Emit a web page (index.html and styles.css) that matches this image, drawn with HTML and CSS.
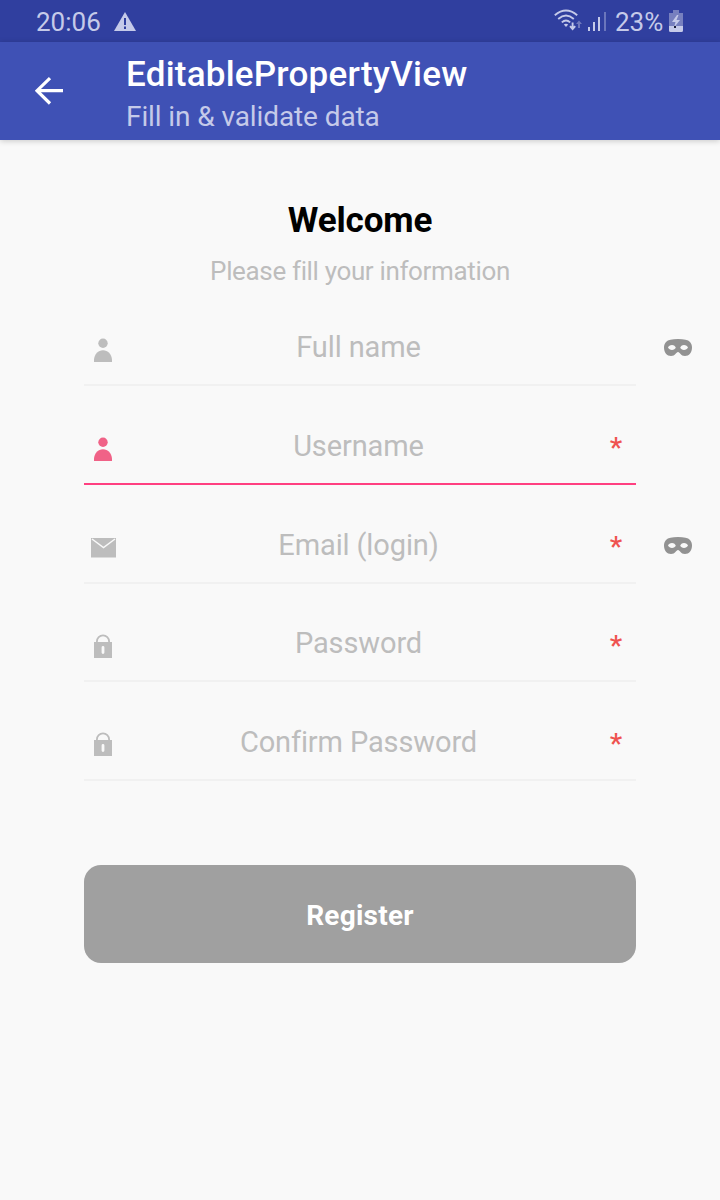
FILE: index.html
```html
<!DOCTYPE html>
<html lang="en">
<head>
<meta charset="utf-8">
<title>EditablePropertyView</title>
<link rel="stylesheet" href="styles.css">
</head>
<body>
<svg class="defs" width="0" height="0">
  <symbol id="person" viewBox="0 0 18 24"><circle cx="9" cy="5.200" r="4.700"/><path d="M0 24v-2.500C.6 16 4 12.200 9 12.200S17.400 16 18 21.500V24z"/></symbol>
  <symbol id="lock" viewBox="0 0 18 24"><path d="M2.900 9V7.500a6.100 6.100 0 0 1 12.200 0V9" fill="none" stroke="currentColor" stroke-width="1.800"/><path fill-rule="evenodd" d="M0 8h18v16H0zM9 12a1.400 1.400 0 0 0-1.400 1.400v5.200a1.400 1.400 0 0 0 2.800 0v-5.200A1.400 1.400 0 0 0 9 12z"/></symbol>
  <symbol id="mask" viewBox="0 0 28 17"><path fill-rule="evenodd" d="M14 0C20 0 24 .7 26 3c1.300 1.500 2 3.300 2 5.500 0 5-3 8.500-7 8.500-4.500 0-5-4-7-4s-2.500 4-7 4c-4 0-7-3.500-7-8.500C0 6.300.7 4.500 2 3 4 .7 8 0 14 0zM8 6C6 6 4.600 7.300 4 8.500 4.800 10 6.200 11 8 11s3.300-1 3.800-2.200C11.300 7.200 10 6 8 6zM20 6c-2 0-3.300 1.200-3.800 2.800C16.700 10 18.200 11 20 11s3.200-1 4-2.500C23.400 7.300 22 6 20 6z"/></symbol>
</svg>
<header class="status">
  <span class="clock">20:06</span>
  <svg class="warn" width="22" height="19" viewBox="0 0 22 19"><path fill="#c5cae9" d="M11 0l11 19H0z"/><path fill="#303f9f" d="M10 6h2v7h-2zM10 14.500h2v2.500h-2z"/></svg>
  <svg class="wifi" width="28" height="22" viewBox="0 0 28 22"><g fill="none" stroke="#c5cae9" stroke-width="1.900"><path d="M.8 6.200q11.200-9.400 22.400 0"/><path d="M4.200 9.900q7.800-6.600 15.600 0"/><path d="M7.800 13.400q4.200-3.600 8.400 0"/><path d="M18.600 13.500v6.500M16 17.200l2.600 2.800 2.600-2.800"/></g><path fill="#c5cae9" d="M9.800 15.500q2.200-1.700 4.400 0L12 18z"/><path fill="#7079bc" d="M25 11.500l-3 3.500h2v4h2v-4h2z"/></svg>
  <svg class="signal" width="18" height="20" viewBox="0 0 18 20"><g fill="#c5cae9"><path d="M0 16h2v4H0zM5 11h2v9H5zM10 6h2v14h-2z"/><path d="M16 1h2v19h-2z" opacity=".4"/></g></svg>
  <span class="percent">23%</span>
  <svg class="battery" width="14" height="22" viewBox="0 0 14 22"><path fill="#7780bf" d="M4 0h6v3h4v13H0V3h4z"/><path fill="#c5cae9" d="M0 16h14v4.500q0 1.500-1.500 1.500h-11Q0 22 0 20.500zM8 5l-5 7h3.500L5 17.500 11 10H7.500L9.500 5z"/><path fill="#171c38" d="M5 16h2v2H5z"/></svg>
</header>
<nav class="toolbar">
  <svg class="back" width="28" height="28" viewBox="0 0 28 28"><path d="M15 1.200L2 13.700l13 12.800M2 13.700h26" fill="none" stroke="#fff" stroke-width="3.200"/></svg>
  <div class="titles">
    <h1 class="title">EditablePropertyView</h1>
    <p class="subtitle">Fill in &amp; validate data</p>
  </div>
</nav>
<main class="content">
  <h2 class="welcome">Welcome</h2>
  <p class="hint">Please fill your information</p>
  <form class="fields">
    <div class="row">
      <div class="field"><svg class="icon person" width="18" height="24"><use href="#person"/></svg><span class="label">Full name</span><span class="star"></span></div>
      <svg class="mask" width="28" height="17"><use href="#mask"/></svg>
    </div>
    <div class="row">
      <div class="field active"><svg class="icon person" width="18" height="24"><use href="#person"/></svg><span class="label">Username</span><span class="star">*</span></div>
    </div>
    <div class="row">
      <div class="field"><svg class="icon mail" width="25" height="20" viewBox="0 0 25 20"><path d="M0 0h25v19.500H0z"/><path d="M1 1l11.500 8.500L24 1" fill="none" stroke="#f9f9f9" stroke-width="1.500"/></svg><span class="label">Email (login)</span><span class="star">*</span></div>
      <svg class="mask" width="28" height="17"><use href="#mask"/></svg>
    </div>
    <div class="row">
      <div class="field"><svg class="icon" width="18" height="24"><use href="#lock"/></svg><span class="label">Password</span><span class="star">*</span></div>
    </div>
    <div class="row">
      <div class="field"><svg class="icon" width="18" height="24"><use href="#lock"/></svg><span class="label">Confirm Password</span><span class="star">*</span></div>
    </div>
  </form>
  <button class="register" type="button">Register</button>
</main>
</body>
</html>
```
FILE: styles.css
```css
* { box-sizing: border-box; }
body { margin: 0; width: 720px; height: 1200px; overflow: hidden; background: #f9f9f9; font-family: Roboto, sans-serif; }
h1, h2, p { margin: 0; }
svg { display: block; flex: none; }
.defs { position: absolute; }
.status { height: 42px; padding: 0 37px 0 36px; display: flex; align-items: center; background: #303f9f; color: #c5cae9; font-size: 26px; line-height: 42px; }
.clock { width: 78px; padding-top: 2px; }
.warn { margin-right: auto; }
.wifi { margin: -2px 6px 0 0; }
.signal { margin-right: 9px; }
.percent { width: 54px; padding-top: 2px; white-space: nowrap; }
.toolbar { height: 98px; display: flex; background: #3f51b5; box-shadow: 0 1px 6px rgba(0, 0, 0, .2); }
.back { margin: 35px 63px 0 35px; }
.title { margin-top: 12px; color: #fff; font-size: 35px; line-height: 41px; font-weight: 500; letter-spacing: .23px; }
.subtitle { margin-top: 5px; color: #c5cae9; font-size: 28px; line-height: 33px; letter-spacing: -.1px; }
.content { padding: 0 84px; }
.welcome { padding-top: 60px; text-align: center; color: #000; font-size: 35px; line-height: 41px; font-weight: 700; letter-spacing: -.15px; }
.hint { margin-top: 15.4px; text-align: center; color: #bdbdbd; font-size: 26px; line-height: 31px; letter-spacing: -.35px; }
.fields { width: 636px; }
.row { height: 98.75px; display: flex; }
.field { width: 552px; height: 98.75px; padding: 36px 0 0; display: grid; grid-template-columns: 38px 1fr 40px; align-items: center; border-bottom: 2px solid #f1f1f1; color: #bdbdbd; }
.active { border-color: #ff4081; }
.active .icon { color: #f06287; }
.icon { justify-self: center; fill: currentColor; margin-top: -9px; }
.person { margin-top: -7.4px; }
.mail { margin: -7px 0 0 1px; }
.label { padding-right: 1px; text-align: center; color: #bdbdbd; font-size: 29px; line-height: 34px; margin-top: -13.4px; letter-spacing: -.12px; }
.star { color: #ef5350; font-size: 28px; line-height: 34px; text-align: center; font-weight: 500; margin-top: -9px; }
.mask { margin: 52px 0 0 28px; fill: #929292; }
.register { display: block; width: 552px; height: 98px; margin-top: 83.85px; border: 0; border-radius: 17px; background: #a0a0a0; color: #fff; font: 700 28px/98px Roboto, sans-serif; letter-spacing: .25px; padding: 2px 0 0; }
```
